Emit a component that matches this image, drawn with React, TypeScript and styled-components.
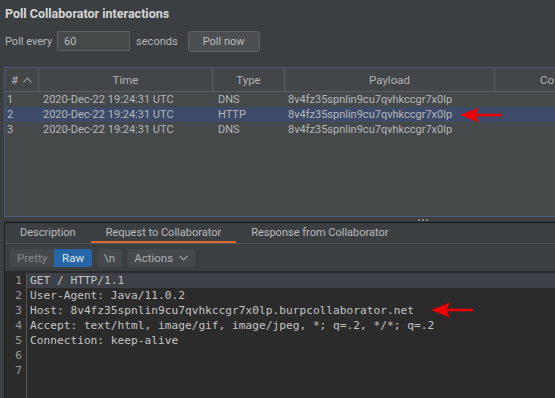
import styled, { createGlobalStyle } from "styled-components";

const GlobalStyle = createGlobalStyle`
  html, body {
    margin: 0;
    padding: 0;
    background: #3c3f41;
  }
  body {
    width: 555px;
    height: 398px;
    overflow: hidden;
  }
`;

const columns = "34px 174px 72px 210px 150px";

const rows = [
  { id: "1", time: "2020-Dec-22 19:24:31 UTC", type: "DNS" },
  { id: "2", time: "2020-Dec-22 19:24:31 UTC", type: "HTTP", selected: true },
  { id: "3", time: "2020-Dec-22 19:24:31 UTC", type: "DNS" },
];

const payload = "8v4fz35spnlin9cu7qvhkccgr7x0lp";

const codeLines = [
  "GET / HTTP/1.1",
  "User-Agent: Java/11.0.2",
  "Host: 8v4fz35spnlin9cu7qvhkccgr7x0lp.burpcollaborator.net",
  "Accept: text/html, image/gif, image/jpeg, *; q=.2, */*; q=.2",
  "Connection: keep-alive",
  "",
  "",
];

const Arrow = ({ left, top }: { left: number; top: number }) => (
  <ArrowMark style={{ left, top }} width="42" height="16" viewBox="0 0 42 16">
    <path d="M0 8 L19 0.5 L16 6.8 L42 6.8 L42 9.2 L16 9.2 L19 15.5 Z" fill="#ee0000" />
  </ArrowMark>
);

const App = () => {
  return (
    <Page>
      <GlobalStyle />
      <Title>Poll Collaborator interactions</Title>
      <PollRow>
        <Label>Poll every</Label>
        <SecondsInput defaultValue="60" />
        <Label>seconds</Label>
        <PollButton>Poll now</PollButton>
      </PollRow>

      <TablePanel>
        <HeaderRow>
          <HeadCell>
            # <svg width="9" height="6" viewBox="0 0 9 6"><path d="M0.5 5.5 L4.5 1 L8.5 5.5" stroke="#a9abad" fill="none" strokeWidth="1.1" /></svg>
          </HeadCell>
          <HeadCell>Time</HeadCell>
          <HeadCell>Type</HeadCell>
          <HeadCell>Payload</HeadCell>
          <HeadCell $last>Co</HeadCell>
        </HeaderRow>
        {rows.map((r) => (
          <Row key={r.id} $selected={!!r.selected}>
            <Cell>{r.id}</Cell>
            <Cell $pad={4}>{r.time}</Cell>
            <Cell $pad={5}>{r.type}</Cell>
            <Cell $pad={3}>{payload}</Cell>
            <Cell />
            {r.selected && <Arrow left={455} top={0} />}
          </Row>
        ))}
      </TablePanel>

      <Splitter>
        <Dot />
        <Dot />
        <Dot />
      </Splitter>

      <BottomPanel>
        <TabBar>
          <Tab>Description</Tab>
          <Tab $active>Request to Collaborator</Tab>
          <Tab>Response from Collaborator</Tab>
        </TabBar>
        <Toolbar>
          <Segmented>
            <ToolButton>Pretty</ToolButton>
            <ToolButton $active>Raw</ToolButton>
          </Segmented>
          <ToolButton $solo>\n</ToolButton>
          <ToolButton $solo>
            Actions
            <svg width="9" height="6" viewBox="0 0 9 6" style={{ marginLeft: 6 }}>
              <path d="M0.5 0.8 L4.5 5 L8.5 0.8" stroke="#a4a7a9" fill="none" strokeWidth="1.1" />
            </svg>
          </ToolButton>
        </Toolbar>
        <Editor>
          <Gutter>
            {codeLines.map((_, i) => (
              <LineNo key={i}>{i + 1}</LineNo>
            ))}
          </Gutter>
          <Code>
            {codeLines.map((line, i) => (
              <CodeLine key={i} $active={i === 0}>
                {line}
                {i === 2 && <Arrow left={404} top={-1} />}
              </CodeLine>
            ))}
          </Code>
        </Editor>
      </BottomPanel>
    </Page>
  );
};

export default App;

const Page = styled.div`
  width: 555px;
  height: 398px;
  display: flex;
  flex-direction: column;
  overflow: hidden;
  background: #3c3f41;
  color: #bbbbbb;
  font-family: Roboto, "Noto Sans", sans-serif;
  font-size: 11px;
`;

const Title = styled.div`
  padding: 6px 5px 0;
  height: 16px;
  line-height: 16px;
  font-size: 12.5px;
  font-weight: bold;
  color: #d6d6d6;
`;

const PollRow = styled.div`
  display: flex;
  align-items: center;
  margin: 9px 0 0 5px;
  height: 20px;
`;

const Label = styled.span`
  font-size: 11px;
  color: #b4b6b8;
`;

const SecondsInput = styled.input`
  box-sizing: border-box;
  width: 73px;
  height: 20px;
  margin: 0 6px 0 5px;
  padding: 0 6px;
  background: #45494a;
  border: 1px solid #5e6163;
  color: #b9bbbd;
  font-family: Roboto, "Noto Sans", sans-serif;
  font-size: 11px;
  outline: none;
`;

const PollButton = styled.button`
  box-sizing: border-box;
  width: 72px;
  height: 21px;
  margin-left: 10px;
  background: #4b4f51;
  border: 1px solid #5e6264;
  border-radius: 3px;
  color: #bbbdbf;
  font-family: Roboto, "Noto Sans", sans-serif;
  font-size: 11px;
  padding: 0;
`;

const TablePanel = styled.div`
  margin: 16px -60px 0 4px;
  height: 148px;
  border: 1px solid #4b5878;
  border-right: none;
  background: #45494a;
  font-size: 11px;
`;

const HeaderRow = styled.div`
  display: grid;
  grid-template-columns: ${columns};
  height: 23px;
  border-bottom: 1px solid #5a5d60;
  background: #434648;
`;

const HeadCell = styled.div<{ $last?: boolean }>`
  display: flex;
  align-items: center;
  justify-content: ${(p) => (p.$last ? "flex-start" : "center")};
  padding-left: ${(p) => (p.$last ? "45px" : "0")};
  gap: 5px;
  border-right: ${(p) => (p.$last ? "none" : "1px solid #5a5d60")};
  color: #b0b2b4;
  font-size: 11.5px;
  white-space: nowrap;
  overflow: hidden;
`;

const Row = styled.div<{ $selected: boolean }>`
  position: relative;
  display: grid;
  grid-template-columns: ${columns};
  height: 15px;
  line-height: 15px;
  background: ${(p) => (p.$selected ? "#3d4b68" : "transparent")};
`;

const Cell = styled.div<{ $pad?: number }>`
  padding-left: ${(p) => p.$pad ?? 2}px;
  white-space: nowrap;
  overflow: hidden;
  color: #b5b7b9;
`;

const ArrowMark = styled.svg`
  position: absolute;
`;

const Splitter = styled.div`
  height: 5px;
  display: flex;
  align-items: center;
  gap: 2px;
  padding-left: 418px;
`;

const Dot = styled.span`
  width: 2px;
  height: 2px;
  border-radius: 1px;
  background: #9a9da0;
`;

const BottomPanel = styled.div`
  flex: 1;
  display: flex;
  flex-direction: column;
  margin-left: 4px;
  border-top: 1px solid #111214;
  border-left: 1px solid #1e1f20;
  min-height: 0;
`;

const TabBar = styled.div`
  display: flex;
  height: 20px;
  border-bottom: 1px solid #515457;
  background: #3c3f41;
`;

const Tab = styled.div<{ $active?: boolean }>`
  box-sizing: border-box;
  padding: 0 15px;
  height: 20px;
  line-height: 19px;
  font-size: 11px;
  color: #b9bbbd;
  border-bottom: 2px solid ${(p) => (p.$active ? "#e0672c" : "transparent")};
  white-space: nowrap;
`;

const Toolbar = styled.div`
  display: flex;
  align-items: center;
  gap: 5px;
  height: 27px;
  padding-left: 5px;
  border-bottom: 2px solid #2a2b2c;
`;

const Segmented = styled.div`
  display: flex;
  border-radius: 3px;
  overflow: hidden;
`;

const ToolButton = styled.div<{ $active?: boolean; $solo?: boolean }>`
  display: flex;
  align-items: center;
  height: 18px;
  padding: 0 ${(p) => (p.$active ? 8 : 7)}px;
  background: ${(p) => (p.$active ? "#2766a6" : "#45494b")};
  color: ${(p) => (p.$active ? "#dde6f0" : p.$solo ? "#aeb0b2" : "#85888a")};
  border-radius: ${(p) => (p.$solo ? "3px" : "0")};
  font-size: 11.5px;
  white-space: nowrap;
`;

const Editor = styled.div`
  flex: 1;
  display: flex;
  background: #2b2b2b;
  font-family: "DejaVu Sans Mono", "Liberation Mono", monospace;
  font-size: 11.2px;
  min-height: 0;
`;

const Gutter = styled.div`
  width: 21px;
  border-right: 1px solid #565656;
  color: #9a9a9a;
  text-align: right;
`;

const LineNo = styled.div`
  height: 15px;
  line-height: 15px;
  padding-right: 4px;
`;

const Code = styled.div`
  flex: 1;
`;

const CodeLine = styled.div<{ $active?: boolean }>`
  position: relative;
  height: 15px;
  line-height: 15px;
  padding-left: 3px;
  white-space: pre;
  color: #c4c4c4;
  background: ${(p) => (p.$active ? "#3d4147" : "transparent")};
`;
